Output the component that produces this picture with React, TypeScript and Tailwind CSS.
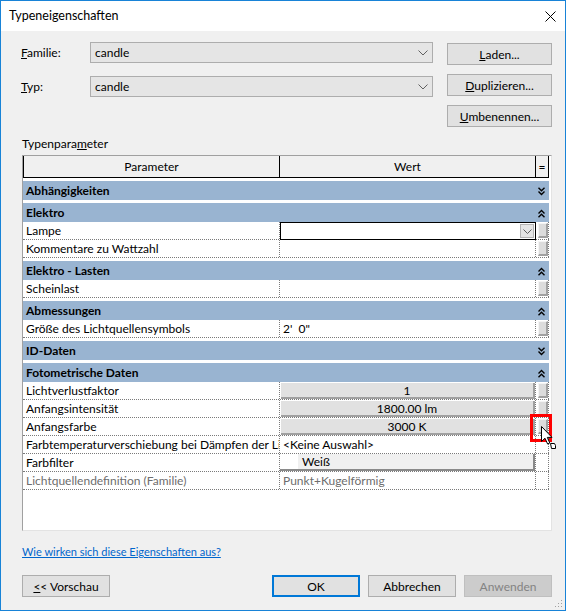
import React from 'react'

type Row =
  | { type: 'cat'; label: string; open: boolean }
  | {
      type: 'data'
      label: string
      value?: string
      kind?: 'text' | 'combo' | 'button' | 'color'
      eq?: boolean
      muted?: boolean
    }

const ROWS: Row[] = [
  { type: 'cat', label: 'Abhängigkeiten', open: false },
  { type: 'cat', label: 'Elektro', open: true },
  { type: 'data', label: 'Lampe', kind: 'combo', eq: true },
  { type: 'data', label: 'Kommentare zu Wattzahl', eq: true },
  { type: 'cat', label: 'Elektro - Lasten', open: true },
  { type: 'data', label: 'Scheinlast', eq: true },
  { type: 'cat', label: 'Abmessungen', open: true },
  { type: 'data', label: 'Größe des Lichtquellensymbols', value: '2\'\u00a0\u00a00"', eq: true },
  { type: 'cat', label: 'ID-Daten', open: false },
  { type: 'cat', label: 'Fotometrische Daten', open: true },
  { type: 'data', label: 'Lichtverlustfaktor', value: '1', kind: 'button', eq: true },
  { type: 'data', label: 'Anfangsintensität', value: '1800.00 lm', kind: 'button', eq: true },
  { type: 'data', label: 'Anfangsfarbe', value: '3000 K', kind: 'button', eq: true },
  { type: 'data', label: 'Farbtemperaturverschiebung bei Dämpfen der Lichtquelle', value: '<Keine Auswahl>' },
  { type: 'data', label: 'Farbfilter', value: 'Weiß', kind: 'color' },
  { type: 'data', label: 'Lichtquellendefinition (Familie)', value: 'Punkt+Kugelförmig', muted: true },
]

function ComboChevron() {
  return (
    <svg width="10" height="6" viewBox="0 0 10 6" fill="none" stroke="#606060" strokeWidth="1">
      <path d="M0.5 0.5L5 5L9.5 0.5" />
    </svg>
  )
}

function Chevrons({ up }: { up: boolean }) {
  return (
    <svg width="7" height="9" viewBox="0 0 7 9" fill="none" stroke="#000" strokeWidth="1.4">
      {up ? (
        <path d="M0.5 4.5L3.5 1.5L6.5 4.5M0.5 8.2L3.5 5.2L6.5 8.2" />
      ) : (
        <path d="M0.5 0.8L3.5 3.8L6.5 0.8M0.5 4.5L3.5 7.5L6.5 4.5" />
      )}
    </svg>
  )
}

function ComboBox({ value }: { value: string }) {
  return (
    <div className="flex h-[21px] w-[343px] items-center justify-between border border-[#adadad] bg-[#e5e5e5] pl-[4px] pr-[4px] pt-px">
      <span>{value}</span>
      <ComboChevron />
    </div>
  )
}

function Btn({
  children,
  kind = 'normal',
  className = '',
}: {
  children: React.ReactNode
  kind?: 'normal' | 'default' | 'disabled'
  className?: string
}) {
  const look =
    kind === 'default'
      ? 'border-2 border-[#0078d7] bg-[#e1e1e1] text-black'
      : kind === 'disabled'
        ? 'border border-[#bfbfbf] bg-[#cccccc] text-[#838383]'
        : 'border border-[#adadad] bg-[#e1e1e1] text-black'
  return (
    <div className={`flex h-[22px] items-center justify-center pt-px ${look} ${className}`}>{children}</div>
  )
}

function EqButton() {
  return (
    <div className="ml-[2px] mt-[1px] h-[15px] w-[10px] border-b-2 border-r-2 border-t border-l border-b-[#a0a0a0] border-r-[#a0a0a0] border-t-[#f4f4f4] border-l-[#f4f4f4] bg-[#dcdcdc]" />
  )
}

const DOT = 'border-dotted border-[#7a7a7a]'

function CategoryRow({ label, open }: { label: string; open: boolean }) {
  return (
    <div className="pt-[3px]">
      <div className="flex h-[19px] w-[526px] items-center bg-[#99b4d1] pt-px">
        <span className="w-[513px] pl-[3px] font-bold">{label}</span>
        <span className="flex w-[13px] justify-center pr-[2px]">
          <Chevrons up={open} />
        </span>
      </div>
    </div>
  )
}

function DataRow({ row }: { row: Extract<Row, { type: 'data' }> }) {
  const text = row.muted ? 'text-[#6d6d6d]' : 'text-black'
  let value: React.ReactNode = (
    <div className={`h-full w-[256px] shrink-0 overflow-hidden whitespace-nowrap border-r pl-[3px] leading-[18px] ${DOT} ${text}`}>
      {row.value}
    </div>
  )
  if (row.kind === 'combo') {
    value = (
      <div className="h-full w-[256px] shrink-0">
        <div className="flex h-[18px] items-center justify-end border border-black bg-white pr-px">
          <div className="flex h-[14px] w-[14px] items-center justify-center border border-[#b4b4b4] bg-[#e5e5e5]">
            <svg width="9" height="5" viewBox="0 0 9 5" fill="none" stroke="#606060" strokeWidth="1">
              <path d="M0.5 0.5L4.5 4.5L8.5 0.5" />
            </svg>
          </div>
        </div>
      </div>
    )
  } else if (row.kind === 'button') {
    value = (
      <div className={`h-full w-[256px] shrink-0 border-r pl-px pt-[1px] ${DOT}`}>
        <div className="flex h-[16px] w-[254px] items-center justify-center border-b-2 border-r-2 border-b-[#a0a0a0] border-r-[#a0a0a0] bg-[#e1e1e1] pt-px leading-none">
          {row.value}
        </div>
      </div>
    )
  } else if (row.kind === 'color') {
    value = (
      <div className={`h-full w-[256px] shrink-0 border-r ${DOT}`}>
        <div className="flex h-[17px] w-[255px] items-center border-b-2 border-r-2 border-b-[#8a8a8a] border-r-[#8a8a8a] bg-[#f0f0f0] leading-none">
          <div className="h-full w-[18px] bg-white" />
          <span className="pl-[4px] pt-px">{row.value}</span>
        </div>
      </div>
    )
  }

  return (
    <div className={`flex h-[18px] w-[526px] border-b ${DOT}`}>
      <div className={`h-full w-[257px] shrink-0 overflow-hidden whitespace-nowrap border-r pl-[3px] leading-[18px] ${DOT} ${text}`}>
        {row.label}
      </div>
      {value}
      <div className={`h-full w-[13px] shrink-0 border-r ${DOT}`}>{row.eq && <EqButton />}</div>
    </div>
  )
}

export default function App() {
  return (
    <div className="relative flex h-[611px] w-[566px] flex-col overflow-hidden border border-[#1883d7] bg-[#f0f0f0] font-['Lato','Noto_Sans',sans-serif] text-[12px] text-black">
      {/* title bar */}
      <div className="flex h-[30px] shrink-0 items-center justify-between bg-white pl-[8px] pr-[9px]">
        <span className="pt-px text-[12.5px]">Typeneigenschaften</span>
        <svg width="11" height="11" viewBox="0 0 11 11" stroke="#000" strokeWidth="1">
          <path d="M0.5 0.5L10.5 10.5M10.5 0.5L0.5 10.5" />
        </svg>
      </div>

      {/* family / type */}
      <div className="flex pl-[20px]">
        <div className="flex flex-col">
          <div className="mt-[11px] flex items-center">
            <span className="w-[69px] pt-px">
              <u>F</u>amilie:
            </span>
            <ComboBox value="candle" />
          </div>
          <div className="mt-[13px] flex items-center">
            <span className="w-[69px] pt-px">
              <u>T</u>yp:
            </span>
            <ComboBox value="candle" />
          </div>
        </div>
        <div className="ml-[14px] mt-[12px] flex flex-col gap-[9px]">
          <Btn className="w-[105px]">
            <span>
              <u>L</u>aden...
            </span>
          </Btn>
          <Btn className="w-[105px]">
            <span>
              <u>D</u>uplizieren...
            </span>
          </Btn>
          <Btn className="w-[105px]">
            <span>
              <u>U</u>mbenennen...
            </span>
          </Btn>
        </div>
      </div>

      <div className="mt-[8px] pl-[21px] leading-[17px]">
        Typenpara<u>m</u>eter
      </div>

      {/* property grid */}
      <div className="ml-[21px] mt-[3px] h-[376px] w-[530px] overflow-hidden border border-b-[#e3e3e3] border-l-[#a0a0a0] border-r-[#e3e3e3] border-t-[#a0a0a0] bg-white">
        <div className="flex h-[22px] w-[526px] border-b border-black bg-[#f0f0f0] leading-[22px]">
          <div className="w-[257px] border-l border-r border-black text-center">Parameter</div>
          <div className="w-[256px] border-r border-black text-center">Wert</div>
          <div className="w-[13px] border-r border-black text-center">=</div>
        </div>
        {ROWS.map((row, i) =>
          row.type === 'cat' ? (
            <CategoryRow key={i} label={row.label} open={row.open} />
          ) : (
            <DataRow key={i} row={row} />
          ),
        )}
      </div>

      <div className="mt-[12px] pl-[21px] text-[11px] leading-[17px]">
        <span className="text-[#0066cc] underline">Wie wirken sich diese Eigenschaften aus?</span>
      </div>

      <div className="mt-[15px] flex pl-[21px] pr-[13px]">
        <Btn className="w-[88px]">
          <span>
            <u>&lt;</u>&lt; Vorschau
          </span>
        </Btn>
        <div className="flex-1" />
        <div className="flex gap-[8px]">
          <Btn kind="default" className="w-[88px]">
            OK
          </Btn>
          <Btn className="w-[88px]">Abbrechen</Btn>
          <Btn kind="disabled" className="w-[88px]">
            Anwenden
          </Btn>
        </div>
      </div>

      {/* highlight + cursor overlay */}
      <div className="absolute left-[529px] top-[413px] h-[28px] w-[22px] border-[3px] border-[#ff0000]" />
      <svg className="absolute left-[540px] top-[425px]" width="16" height="24" viewBox="0 0 16 24">
        <path d="M0.5 0.5L0.5 15.5L4 12.2L6.6 18L8.8 17L6.3 11.4L11 11.4Z" fill="#fff" stroke="#000" strokeWidth="1" />
        <path d="M9.5 17.5L13.5 17.5L14.5 19.5L14.5 22.5L10.5 22.5Z" fill="#fff" stroke="#000" strokeWidth="1" />
      </svg>

      {/* resize grip */}
      <svg className="absolute bottom-[2px] right-[2px]" width="8" height="8" viewBox="0 0 8 8" fill="#a0a0a0">
        <rect x="6" y="0" width="1" height="1" />
        <rect x="3" y="3" width="1" height="1" />
        <rect x="6" y="3" width="1" height="1" />
        <rect x="0" y="6" width="1" height="1" />
        <rect x="3" y="6" width="1" height="1" />
        <rect x="6" y="6" width="1" height="1" />
      </svg>
    </div>
  )
}
